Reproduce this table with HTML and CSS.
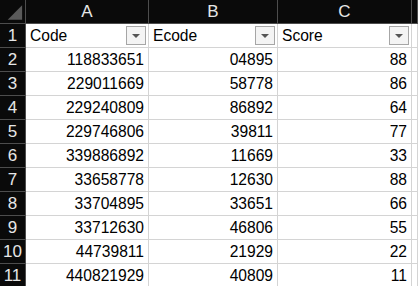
FILE: index.html
```html
<!DOCTYPE html>
<html>
<head>
<meta charset="utf-8">
<link rel="stylesheet" href="styles.css">
</head>
<body>
<div class="sheet">
  <div class="hd corner"><svg class="tri" width="26" height="24" viewBox="0 0 26 24"><polygon points="23,5 23,20 8,20" fill="#5a5a5a"/></svg></div>
  <div class="hd col">A</div>
  <div class="hd col">B</div>
  <div class="hd col">C</div>
  <div class="hd col"></div>

  <div class="hd rn">1</div>
  <div class="c th"><span>Code</span><span class="dd"><i></i></span></div>
  <div class="c th"><span>Ecode</span><span class="dd"><i></i></span></div>
  <div class="c th"><span>Score</span><span class="dd"><i></i></span></div>
  <div class="c"></div>

  <div class="hd rn">2</div><div class="c n">118833651</div><div class="c n">04895</div><div class="c n">88</div><div class="c"></div>
  <div class="hd rn">3</div><div class="c n">229011669</div><div class="c n">58778</div><div class="c n">86</div><div class="c"></div>
  <div class="hd rn">4</div><div class="c n">229240809</div><div class="c n">86892</div><div class="c n">64</div><div class="c"></div>
  <div class="hd rn">5</div><div class="c n">229746806</div><div class="c n">39811</div><div class="c n">77</div><div class="c"></div>
  <div class="hd rn">6</div><div class="c n">339886892</div><div class="c n">11669</div><div class="c n">33</div><div class="c"></div>
  <div class="hd rn">7</div><div class="c n">33658778</div><div class="c n">12630</div><div class="c n">88</div><div class="c"></div>
  <div class="hd rn">8</div><div class="c n">33704895</div><div class="c n">33651</div><div class="c n">66</div><div class="c"></div>
  <div class="hd rn">9</div><div class="c n">33712630</div><div class="c n">46806</div><div class="c n">55</div><div class="c"></div>
  <div class="hd rn">10</div><div class="c n">44739811</div><div class="c n">21929</div><div class="c n">22</div><div class="c"></div>
  <div class="hd rn">11</div><div class="c n">440821929</div><div class="c n">40809</div><div class="c n">11</div><div class="c"></div>
</div>
</body>
</html>
```

FILE: styles.css
```css
html, body {
  margin: 0;
  padding: 0;
  background: #ffffff;
  overflow: hidden;
}
.sheet {
  display: grid;
  grid-template-columns: 26px 123px 129px 134px 1fr;
  grid-template-rows: 24px;
  grid-auto-rows: 24px;
  width: 418px;
  font-family: "Liberation Sans", Arial, sans-serif;
  font-size: 15.6px;
}
.sheet > div {
  box-sizing: border-box;
  border-right: 1px solid #d4d4d4;
  border-bottom: 1px solid #d4d4d4;
  min-width: 0;
  overflow: hidden;
  white-space: nowrap;
}
.sheet > .hd {
  background: #0a0a0a;
  color: #e6e6e6;
  border-right-color: #4d4d4d;
  border-bottom-color: #4d4d4d;
  display: flex;
  align-items: center;
  justify-content: center;
  font-size: 17px;
}
.corner {
  position: relative;
}
.tri {
  display: block;
}
.c {
  color: #000;
  display: flex;
  align-items: center;
}
.th {
  justify-content: space-between;
  padding-left: 4px;
  padding-right: 2px;
}
.n {
  justify-content: flex-end;
  padding-right: 4px;
}
.dd {
  width: 20px;
  height: 19px;
  box-sizing: border-box;
  border: 1px solid #a6a6a6;
  background: #f4f4f4;
  display: flex;
  align-items: center;
  justify-content: center;
}
.dd i {
  width: 0;
  height: 0;
  border-left: 4px solid transparent;
  border-right: 4px solid transparent;
  border-top: 4px solid #555555;
}
```
